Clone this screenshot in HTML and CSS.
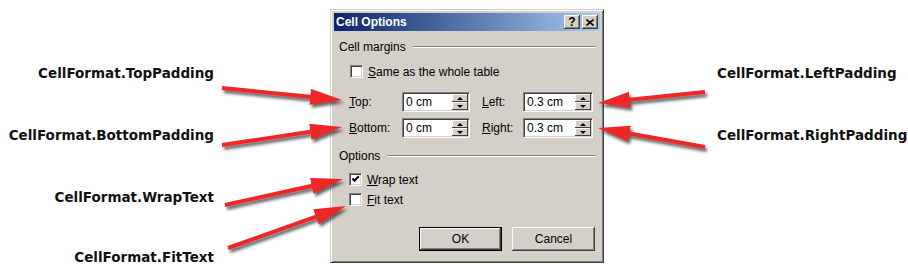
FILE: index.html
```html
<html>
  <head>
    <title>Cell Options</title>
    <meta name="viewport" content="width=device-width, initial-scale=1.0">
    <link rel="stylesheet" href="styles.css">
  </head>
  <body>
    <div class="page">
      <div class="notes notes-left">
        <div class="note">CellFormat.TopPadding</div>
        <div class="note">CellFormat.BottomPadding</div>
        <div class="note">CellFormat.WrapText</div>
        <div class="note note-fit">CellFormat.FitText</div>
      </div>

      <div class="dialog">
        <div class="titlebar">
          <span class="title">Cell Options</span>
          <span class="cbtn cbtn-help">?</span>
          <span class="cbtn cbtn-close">
            <svg width="8" height="7" viewBox="0 0 8 7"><path d="M0.5 0.5 L7.5 6.5 M7.5 0.5 L0.5 6.5" stroke="#000" stroke-width="1.6"/></svg>
          </span>
        </div>

        <div class="body">
          <div class="group"><span>Cell margins</span><i class="rule"></i></div>

          <div class="check check-same">
            <span class="box"></span>
            <span><u>S</u>ame as the whole table</span>
          </div>

          <div class="margins">
            <span class="lbl"><u>T</u>op:</span>
            <div class="spin spin-a"><span class="val">0 cm</span><span class="spinbtns"><span class="up"></span><span class="dn"></span></span></div>
            <span class="lbl lbl-r"><u>L</u>eft:</span>
            <div class="spin spin-b"><span class="val">0.3 cm</span><span class="spinbtns"><span class="up"></span><span class="dn"></span></span></div>

            <span class="lbl"><u>B</u>ottom:</span>
            <div class="spin spin-a"><span class="val">0 cm</span><span class="spinbtns"><span class="up"></span><span class="dn"></span></span></div>
            <span class="lbl lbl-r"><u>R</u>ight:</span>
            <div class="spin spin-b"><span class="val">0.3 cm</span><span class="spinbtns"><span class="up"></span><span class="dn"></span></span></div>
          </div>

          <div class="group group-opts"><span>Options</span><i class="rule"></i></div>

          <div class="check check-wrap">
            <span class="box">
              <svg width="9" height="9" viewBox="0 0 9 9"><path d="M1.5 3.5 L3.5 5.8 L7.8 1.3" fill="none" stroke="#000" stroke-width="2"/></svg>
            </span>
            <span><u>W</u>rap text</span>
          </div>
          <div class="check check-fit">
            <span class="box"></span>
            <span><u>F</u>it text</span>
          </div>

          <div class="buttons">
            <div class="btn btn-default">OK</div>
            <div class="btn">Cancel</div>
          </div>
        </div>
      </div>

      <div class="notes notes-right">
        <div class="note">CellFormat.LeftPadding</div>
        <div class="note">CellFormat.RightPadding</div>
      </div>

      <svg class="arrows" width="908" height="277" viewBox="0 0 908 277">
        <defs>
          <marker id="head" markerUnits="userSpaceOnUse" markerWidth="34" markerHeight="18" refX="10" refY="8" orient="auto">
            <path d="M0 0 L32 8 L0 16 Z" fill="#ee2626"/>
          </marker>
          <filter id="shadow" x="-20%" y="-50%" width="140%" height="200%">
            <feDropShadow dx="2" dy="3" stdDeviation="1.6" flood-color="#333" flood-opacity="0.75"/>
          </filter>
        </defs>
        <g filter="url(#shadow)" stroke="#ee2626" stroke-width="4" marker-end="url(#head)">
          <line x1="222" y1="88" x2="320.1" y2="97.8"/>
          <line x1="222" y1="145" x2="320.2" y2="130.3"/>
          <line x1="705" y1="92" x2="619.9" y2="100.8"/>
          <line x1="705" y1="147" x2="619.6" y2="131.8"/>
          <line x1="225" y1="205" x2="321.5" y2="183.7"/>
          <line x1="228" y1="248" x2="325.3" y2="213.4"/>
        </g>
      </svg>
    </div>
  </body>
</html>
```

FILE: styles.css
```css
body {
  margin: 0;
  background: #fff;
}

.page {
  position: relative;
  display: flex;
  width: 908px;
  height: 277px;
}

/* annotations */
.notes {
  display: flex;
  flex-direction: column;
  gap: 46px;
  padding-top: 65px;
  font: bold 13.5px/16px "DejaVu Sans", Verdana, sans-serif;
  color: #111;
  white-space: nowrap;
}

.notes-left {
  width: 214px;
  align-items: flex-end;
}

.notes-right {
  margin-left: 113px;
}

.note-fit {
  margin-top: -2px;
}

.arrows {
  position: absolute;
  left: 0;
  top: 0;
  pointer-events: none;
}

/* dialog window */
.dialog {
  box-sizing: border-box;
  width: 274px;
  height: 254px;
  margin: 9px 0 0 116px;
  padding: 3px;
  background: #d4d0c8;
  border: 1px solid;
  border-color: #d4d0c8 #404040 #404040 #d4d0c8;
  box-shadow: inset 1px 1px #fff, inset -1px -1px #808080;
  font: 12px/14px "Liberation Sans", Arial, sans-serif;
  color: #000;
}

.titlebar {
  display: flex;
  align-items: center;
  height: 18px;
  padding: 0 2px;
  background: linear-gradient(to right, #0a246a, #a6caf0);
}

.title {
  flex: 1;
  font-weight: bold;
  color: #fff;
}

.cbtn {
  box-sizing: border-box;
  display: flex;
  align-items: center;
  justify-content: center;
  width: 16px;
  height: 14px;
  background: #d4d0c8;
  box-shadow: inset -1px -1px #404040, inset 1px 1px #fff, inset -2px -2px #808080;
  font: bold 12px/12px "Liberation Sans", Arial, sans-serif;
}

.cbtn-close {
  margin-left: 2px;
}

.body {
  padding: 9px 4px 0 5px;
}

.group {
  display: flex;
  align-items: center;
}

.rule {
  flex: 1;
  height: 0;
  margin-left: 7px;
  border-top: 1px solid #808080;
  border-bottom: 1px solid #fff;
}

.group-opts {
  margin-top: 11px;
}

.check {
  display: flex;
  align-items: center;
  gap: 5px;
  height: 13px;
  margin-left: 11px;
}

.check-same {
  margin-top: 11px;
}

.check-wrap {
  margin-top: 10px;
  margin-left: 10px;
}

.check-fit {
  margin-top: 7px;
  margin-left: 10px;
}

.box {
  box-sizing: border-box;
  display: flex;
  align-items: center;
  justify-content: center;
  width: 13px;
  height: 13px;
  background: #fff;
  border: 1px solid;
  border-color: #808080 #fff #fff #808080;
  box-shadow: inset 1px 1px #404040, inset -1px -1px #d4d0c8;
}

.margins {
  display: grid;
  grid-template-columns: 53px 68px 53px 70px;
  row-gap: 6px;
  align-items: center;
  margin: 14px 0 0 10px;
}

.lbl-r {
  padding-left: 12px;
}

.spin {
  box-sizing: border-box;
  display: flex;
  height: 20px;
  padding: 1px;
  background: #fff;
  border: 1px solid;
  border-color: #808080 #fff #fff #808080;
  box-shadow: inset 1px 1px #404040, inset -1px -1px #d4d0c8;
}

.val {
  flex: 1;
  padding-left: 2px;
  line-height: 16px;
}

.spinbtns {
  display: flex;
  flex-direction: column;
  width: 16px;
}

.spinbtns span {
  flex: 1;
  display: flex;
  align-items: center;
  justify-content: center;
  background: #d4d0c8;
  box-shadow: inset -1px -1px #404040, inset 1px 1px #fff;
}

.spinbtns .up::after {
  content: "";
  border-left: 3px solid transparent;
  border-right: 3px solid transparent;
  border-bottom: 3px solid #000;
}

.spinbtns .dn::after {
  content: "";
  border-left: 3px solid transparent;
  border-right: 3px solid transparent;
  border-top: 3px solid #000;
}

.buttons {
  display: flex;
  justify-content: flex-end;
  gap: 10px;
  margin-top: 21px;
  padding-right: 1px;
}

.btn {
  box-sizing: border-box;
  display: flex;
  align-items: center;
  justify-content: center;
  width: 83px;
  height: 24px;
  background: #d4d0c8;
  box-shadow: inset -1px -1px #404040, inset 1px 1px #fff, inset -2px -2px #808080;
}

.btn-default {
  border: 1px solid #000;
}
```
